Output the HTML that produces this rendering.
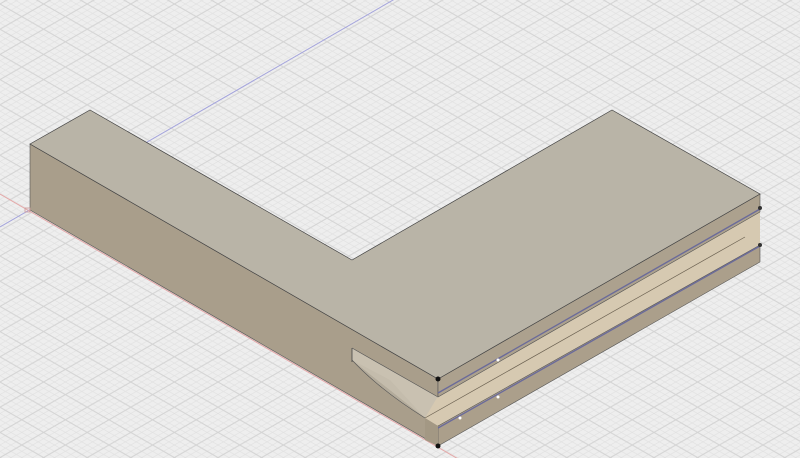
<!DOCTYPE html>
<html><head><meta charset="utf-8"><style>html,body{margin:0;padding:0;background:#ededed;overflow:hidden}svg{display:block}</style></head>
<body>
<svg width="800" height="458" viewBox="0 0 800 458" xmlns="http://www.w3.org/2000/svg">
<defs>
<pattern id="minor" patternUnits="userSpaceOnUse" width="10.9" height="6.3" x="0" y="4">
<path d="M0 0L10.9 6.3M0 6.3L10.9 0" stroke="#e0e0e0" stroke-width="0.6" fill="none"/>
</pattern>
<pattern id="major" patternUnits="userSpaceOnUse" width="43.6" height="25.2" x="0" y="4">
<path d="M0 0L43.6 25.2M0 25.2L43.6 0" stroke="#d4d4d4" stroke-width="1" fill="none"/>
</pattern>
</defs>
<rect width="800" height="458" fill="#eeeeee"/>
<rect width="800" height="458" fill="url(#minor)"/>
<rect width="800" height="458" fill="url(#major)"/>
<line x1="0" y1="227" x2="400" y2="-4" stroke="#a4a4dc" stroke-width="1"/>
<line x1="0" y1="194" x2="460" y2="460" stroke="#e4a8a8" stroke-width="1"/>
<polygon points="30,144 438,379 438,446 30,210" fill="#a99e8b" stroke="#555" stroke-width="0.6"/>
<polygon points="352,348 438,397 438,425 425,418 352,360" fill="#c9c1b1"/>
<path d="M352,360 Q380,390 425,418 L352,360Z" fill="#b3ab9b"/>
<polygon points="352,360 390,380 425,418" fill="#c4bcac"/>
<line x1="352" y1="348" x2="352" y2="362" stroke="#444" stroke-width="0.8"/>
<path d="M352,348 L438,397 M352,360 Q380,390 425,418" stroke="#555" stroke-width="0.6" fill="none"/>
<polygon points="425,418 438,426 760,245 760,210 438,396" fill="#d6c9b1"/>
<line x1="425" y1="418" x2="745" y2="237" stroke="#6a6050" stroke-width="0.7"/>
<polygon points="438,426 760,245 760,262 438,446" fill="#ab9f8b" stroke="#555" stroke-width="0.6"/>
<line x1="438" y1="428" x2="760" y2="246" stroke="#6b6b9a" stroke-width="1.4"/>
<polygon points="425,418 438,426 438,446 425,440" fill="#a39884"/>
<polygon points="438,379 760,194 760,212 438,397" fill="#aca18e" stroke="#555" stroke-width="0.6"/>
<line x1="438" y1="393" x2="760" y2="209" stroke="#6b6b9a" stroke-width="1.4"/>
<polygon points="30,144 90,110 352,260 612,110 760,194 438,379" fill="#b9b4a7" stroke="#444" stroke-width="0.7"/>
<circle cx="438" cy="379" r="2.5" fill="#111"/>
<circle cx="438" cy="446" r="2.5" fill="#111"/>
<circle cx="760" cy="208" r="2" fill="#333"/>
<circle cx="760" cy="245" r="2" fill="#333"/>
<circle cx="498" cy="360" r="1.5" fill="#fff"/>
<circle cx="498" cy="397" r="1.5" fill="#fff"/>
<circle cx="460" cy="418" r="1.5" fill="#fff"/>
<rect x="25" y="208" width="5" height="4" fill="none" stroke="#c99" stroke-width="0.8"/>
</svg>
</body></html>
